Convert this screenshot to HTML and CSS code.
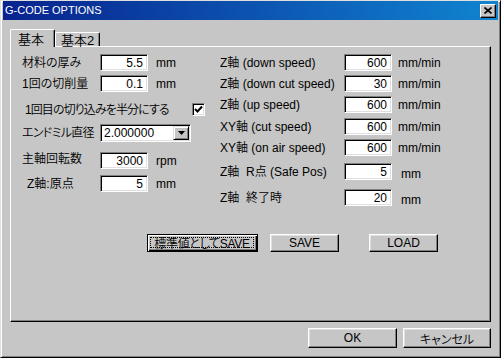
FILE: index.html
```html
<!DOCTYPE html>
<html lang="ja">
<head>
    <meta charset="UTF-8">
    <meta name="viewport" content="width=device-width, initial-scale=1.0">
    <title>G-CODE OPTIONS</title>
    <link rel="stylesheet" href="styles.css">
</head>
<body>
    <div class="window">
        <div class="titlebar">
            <span class="title">G-CODE OPTIONS</span>
            <button class="close-btn" type="button">
                <svg width="8" height="7" viewBox="0 0 8 7">
                    <path d="M0.5 0.5 L7.5 6.5 M7.5 0.5 L0.5 6.5" stroke="#000" stroke-width="1.7" fill="none"/>
                </svg>
            </button>
        </div>

        <div class="content">
            <div class="tabs">
                <div class="tab active">基本</div>
                <div class="tab">基本2</div>
            </div>

            <div class="panel">
                <div class="form">
                    <!-- left column -->
                    <div class="col col-left">
                        <div class="row">
                            <span class="label">材料の厚み</span>
                            <input class="field" type="text" value="5.5">
                            <span class="unit">mm</span>
                        </div>
                        <div class="row gap-4">
                            <span class="label">1回の切削量</span>
                            <input class="field" type="text" value="0.1">
                            <span class="unit">mm</span>
                        </div>
                        <div class="row row-check">
                            <span class="check-label">1回目の切り込みを半分にする</span>
                            <span class="checkbox">
                                <svg width="9" height="9" viewBox="0 0 9 9">
                                    <path d="M1 4 L3.5 6.5 L8 1.5" stroke="#000" stroke-width="2" fill="none"/>
                                </svg>
                            </span>
                        </div>
                        <div class="row row-combo">
                            <span class="label label-tight">エンドミル直径</span>
                            <div class="combo">
                                <span class="combo-text">2.000000</span>
                                <span class="combo-btn">
                                    <svg width="7" height="4" viewBox="0 0 7 4"><polygon points="0,0 7,0 3.5,4" fill="#000"/></svg>
                                </span>
                            </div>
                        </div>
                        <div class="row row-rpm">
                            <span class="label label-high">主軸回転数</span>
                            <input class="field" type="text" value="3000">
                            <span class="unit">rpm</span>
                        </div>
                        <div class="row gap-6">
                            <span class="label label-indent">Z軸:原点</span>
                            <input class="field" type="text" value="5">
                            <span class="unit">mm</span>
                        </div>
                    </div>

                    <!-- right column -->
                    <div class="col col-right">
                        <div class="row">
                            <span class="label">Z軸 (down speed)</span>
                            <input class="field" type="text" value="600">
                            <span class="unit">mm/min</span>
                        </div>
                        <div class="row gap-4">
                            <span class="label">Z軸 (down cut speed)</span>
                            <input class="field" type="text" value="30">
                            <span class="unit">mm/min</span>
                        </div>
                        <div class="row gap-4">
                            <span class="label">Z軸 (up speed)</span>
                            <input class="field" type="text" value="600">
                            <span class="unit">mm/min</span>
                        </div>
                        <div class="row gap-5">
                            <span class="label">XY軸 (cut speed)</span>
                            <input class="field" type="text" value="600">
                            <span class="unit">mm/min</span>
                        </div>
                        <div class="row gap-4">
                            <span class="label">XY軸 (on air speed)</span>
                            <input class="field" type="text" value="600">
                            <span class="unit">mm/min</span>
                        </div>
                        <div class="row gap-7">
                            <span class="label">Z軸&nbsp;&nbsp;R点 (Safe Pos)</span>
                            <input class="field" type="text" value="5">
                            <span class="unit unit-low">mm</span>
                        </div>
                        <div class="row gap-9">
                            <span class="label">Z軸&nbsp;&nbsp;終了時</span>
                            <input class="field" type="text" value="20">
                            <span class="unit unit-low">mm</span>
                        </div>
                    </div>
                </div>

                <div class="actions">
                    <button class="btn btn-default" type="button"><span class="focus">標準値としてSAVE</span></button>
                    <button class="btn btn-save" type="button">SAVE</button>
                    <button class="btn btn-load" type="button">LOAD</button>
                </div>
            </div>

            <div class="footer">
                <button class="btn btn-ok" type="button">OK</button>
                <button class="btn btn-cancel" type="button">キャンセル</button>
            </div>
        </div>
    </div>
</body>
</html>
```

FILE: styles.css
```css
* {
    margin: 0;
    padding: 0;
    box-sizing: border-box;
    font-family: "Liberation Sans", "Noto Sans CJK JP", sans-serif;
    font-weight: 350;
    font-feature-settings: "palt";
}

body {
    background: #c6c6c6;
    font-size: 12px;
    line-height: 1;
    color: #000;
}

.window {
    width: 501px;
    height: 358px;
    background: #c6c6c6;
    border: 1px solid;
    border-color: #dfdfdf #000 #000 #dfdfdf;
    box-shadow: inset 1px 1px #fff, inset -1px -1px #808080;
    padding: 0 2px 2px 2px;
}

/* title bar */
.titlebar {
    height: 19px;
    display: flex;
    align-items: center;
    justify-content: space-between;
    padding-left: 2px;
    padding-right: 2px;
    background: linear-gradient(to right, #08228e, #1084d0);
}

.title {
    color: #fff;
    font-size: 11px;
}

.close-btn {
    width: 16px;
    height: 14px;
    display: flex;
    align-items: center;
    justify-content: center;
    background: #c6c6c6;
    border: 1px solid;
    border-color: #fff #000 #000 #fff;
    box-shadow: inset -1px -1px #808080;
}

/* tabs */
.content {
    padding: 9px 7px 0 7px;
}

.tabs {
    display: flex;
    align-items: flex-end;
    height: 17px;
    position: relative;
    z-index: 1;
}

.tab {
    height: 14px;
    padding: 1px 5px 0 5px;
    background: #c6c6c6;
    border: 1px solid;
    border-bottom: none;
    border-color: #fff #000 #000 #fff;
    border-radius: 2px 2px 0 0;
    box-shadow: inset -1px 0 #808080;
    font-size: 13px;
}

.tab.active {
    height: 18px;
    width: 45px;
    margin-bottom: -1px;
    padding: 3px 0 0 7px;
}

/* panel */
.panel {
    height: 276px;
    border: 1px solid;
    border-color: #fff #000 #000 #fff;
    box-shadow: inset -1px -1px #808080;
}

.form {
    display: flex;
    padding: 7px 0 0 11px;
}

.col-left {
    width: 198px;
}

.row {
    display: flex;
    align-items: center;
    height: 17px;
    white-space: nowrap;
}

.gap-4 { margin-top: 4px; }
.gap-5 { margin-top: 5px; }
.gap-6 { margin-top: 6px; }
.gap-7 { margin-top: 7px; }
.gap-9 { margin-top: 9px; }

.label {
    flex-shrink: 0;
}

.col-left .label {
    width: 78px;
}

.col-right .label {
    width: 124px;
}

.label-tight {
    letter-spacing: -0.7px;
}

.label-indent {
    padding-left: 5px;
}

.label-high {
    margin-top: -3px;
}

.field {
    width: 48px;
    height: 17px;
    background: #fff;
    border: 1px solid;
    border-color: #808080 #fff #fff #808080;
    box-shadow: inset 1px 1px #000, inset -1px -1px #dfdfdf;
    font-size: 12px;
    text-align: right;
    padding: 1px 4px 0 2px;
    color: #000;
    outline: none;
}

.unit {
    margin-left: 8px;
}

.col-right .unit {
    margin-left: 6px;
}

.col-right .unit-low {
    margin-left: 9px;
    padding-top: 5px;
}

.row-check {
    margin-top: 11px;
    height: 13px;
}

.check-label {
    width: 170px;
    flex-shrink: 0;
    padding-left: 3px;
    letter-spacing: -0.9px;
}

.checkbox {
    width: 13px;
    height: 13px;
    display: flex;
    align-items: center;
    justify-content: center;
    background: #fff;
    border: 1px solid;
    border-color: #808080 #fff #fff #808080;
    box-shadow: inset 1px 1px #000, inset -1px -1px #dfdfdf;
}

.row-combo {
    margin-top: 8px;
    height: 18px;
}

.combo {
    width: 91px;
    height: 18px;
    display: flex;
    align-items: center;
    justify-content: space-between;
    background: #fff;
    border: 1px solid;
    border-color: #808080 #fff #fff #808080;
    box-shadow: inset 1px 1px #000, inset -1px -1px #dfdfdf;
    padding: 2px 1px 2px 3px;
}

.combo-btn {
    width: 16px;
    height: 14px;
    display: flex;
    align-items: center;
    justify-content: center;
    background: #c6c6c6;
    border: 1px solid;
    border-color: #dfdfdf #000 #000 #dfdfdf;
    box-shadow: inset 1px 1px #fff, inset -1px -1px #808080;
}

.row-rpm {
    margin-top: 10px;
}

/* buttons */
.btn {
    display: flex;
    align-items: center;
    justify-content: center;
    white-space: nowrap;
    background: #c6c6c6;
    border: 1px solid;
    border-color: #fff #000 #000 #fff;
    box-shadow: inset -1px -1px #808080, inset 1px 1px #dfdfdf;
    font-size: 12px;
    color: #000;
}

.actions {
    display: flex;
    margin-top: 28px;
    padding-left: 136px;
}

.actions .btn {
    height: 18px;
}

.btn-default {
    width: 111px;
    border-color: #000;
    box-shadow: inset 1px 1px #fff, inset -1px -1px #000, inset -2px -2px #808080;
    padding: 2px 3px 3px 2px;
    letter-spacing: -0.3px;
}

.focus {
    flex: 1;
    height: 100%;
    display: flex;
    align-items: center;
    justify-content: center;
    border: 1px dotted #000;
}

.btn-save {
    width: 69px;
    margin-left: 12px;
}

.btn-load {
    width: 69px;
    margin-left: 30px;
}

.footer {
    display: flex;
    justify-content: flex-end;
    gap: 6px;
    margin-top: 6px;
}

.btn-ok {
    width: 89px;
    height: 20px;
}

.btn-cancel {
    width: 88px;
    height: 20px;
}
```
